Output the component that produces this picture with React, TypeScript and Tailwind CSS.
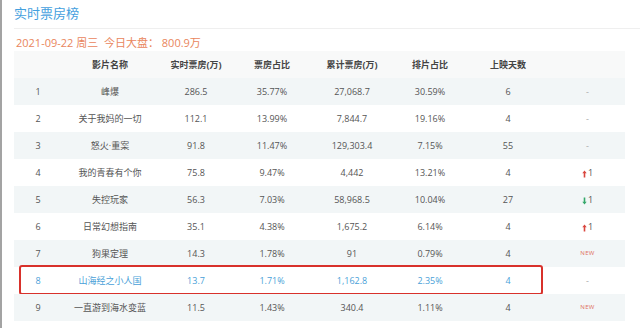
import React from "react";

type Row = {
  rank: number;
  name: string;
  rt: string;
  share: string;
  total: string;
  sched: string;
  days: string;
  trend: "none" | "up" | "down" | "new";
};

const rows: Row[] = [
  { rank: 1, name: "峰爆", rt: "286.5", share: "35.77%", total: "27,068.7", sched: "30.59%", days: "6", trend: "none" },
  { rank: 2, name: "关于我妈的一切", rt: "112.1", share: "13.99%", total: "7,844.7", sched: "19.16%", days: "4", trend: "none" },
  { rank: 3, name: "怒火·重案", rt: "91.8", share: "11.47%", total: "129,303.4", sched: "7.15%", days: "55", trend: "none" },
  { rank: 4, name: "我的青春有个你", rt: "75.8", share: "9.47%", total: "4,442", sched: "13.21%", days: "4", trend: "up" },
  { rank: 5, name: "失控玩家", rt: "56.3", share: "7.03%", total: "58,968.5", sched: "10.04%", days: "27", trend: "down" },
  { rank: 6, name: "日常幻想指南", rt: "35.1", share: "4.38%", total: "1,675.2", sched: "6.14%", days: "4", trend: "up" },
  { rank: 7, name: "狗果定理", rt: "14.3", share: "1.78%", total: "91", sched: "0.79%", days: "4", trend: "new" },
  { rank: 8, name: "山海经之小人国", rt: "13.7", share: "1.71%", total: "1,162.8", sched: "2.35%", days: "4", trend: "none" },
  { rank: 9, name: "一直游到海水变蓝", rt: "11.5", share: "1.43%", total: "340.4", sched: "1.11%", days: "4", trend: "new" },
];

const cols = "grid grid-cols-[48px_96px_76px_76px_84px_72px_84px_75px]";

function Trend({ t }: { t: Row["trend"] }) {
  if (t === "up")
    return (
      <span className="flex items-start gap-[1px] text-[#555]">
        <svg width="5" height="8" viewBox="0 0 5 8" className="mt-[2px]">
          <path d="M2.5 0.5 L0.3 3.2 H1.7 V7.5 H3.3 V3.2 H4.7 Z" fill="#d9463e" />
        </svg>
        <span className="leading-[10px]">1</span>
      </span>
    );
  if (t === "down")
    return (
      <span className="flex items-start gap-[1px] text-[#555]">
        <svg width="5" height="8" viewBox="0 0 5 8" className="mt-[2px]">
          <path d="M2.5 7.5 L0.3 4.8 H1.7 V0.5 H3.3 V4.8 H4.7 Z" fill="#35a86a" />
        </svg>
        <span className="leading-[10px]">1</span>
      </span>
    );
  if (t === "new") return <span className="text-[6px] text-[#e0715e] tracking-[0.3px]">NEW</span>;
  return <span className="text-[#aaa]">-</span>;
}

export default function App() {
  return (
    <div className="w-[640px] h-[328px] bg-white border-l-2 border-[#a3a3a3] overflow-hidden font-['Open_Sans','Noto_Sans_CJK_SC',sans-serif]">
      {/* title */}
      <div className="ml-3 h-[29px] flex items-center border-b border-[#efefef]">
        <span className="text-[13px] text-[#44a0de] font-['Noto_Sans_CJK_SC',sans-serif] pb-[2px]">实时票房榜</span>
      </div>

      {/* date */}
      <div className="ml-3 h-[22px] pt-[7px] pl-[2px] text-[11px] leading-[14px] text-[#e9865d]">
        2021-09-22 周三&nbsp;&nbsp;今日大盘： 800.9万
      </div>

      {/* table */}
      <div className="ml-3 w-[611px] text-[9px] text-[#555]">
        <div className={`${cols} h-[27px] bg-[#f8f9f9] font-bold text-[#444] items-center text-center`}>
          <span></span>
          <span>影片名称</span>
          <span>实时票房(万)</span>
          <span>票房占比</span>
          <span>累计票房(万)</span>
          <span>排片占比</span>
          <span>上映天数</span>
          <span></span>
        </div>
        {rows.map((r) => {
          const hl = r.rank === 8;
          return (
            <div
              key={r.rank}
              className={`${cols} relative h-[27px] items-center text-center ${r.rank % 2 === 1 ? "bg-[#f2f6f7]" : "bg-white"} ${hl ? "text-[#4a9fd8]" : ""}`}
            >
              <span>{r.rank}</span>
              <span>{r.name}</span>
              <span>{r.rt}</span>
              <span>{r.share}</span>
              <span>{r.total}</span>
              <span>{r.sched}</span>
              <span>{r.days}</span>
              <span className="flex justify-center">
                <Trend t={r.trend} />
              </span>
              {hl && (
                <div className="absolute left-[5px] top-[-2px] w-[524px] h-[30px] border-2 border-[#d8312b] rounded-[3px]" />
              )}
            </div>
          );
        })}
      </div>
    </div>
  );
}
